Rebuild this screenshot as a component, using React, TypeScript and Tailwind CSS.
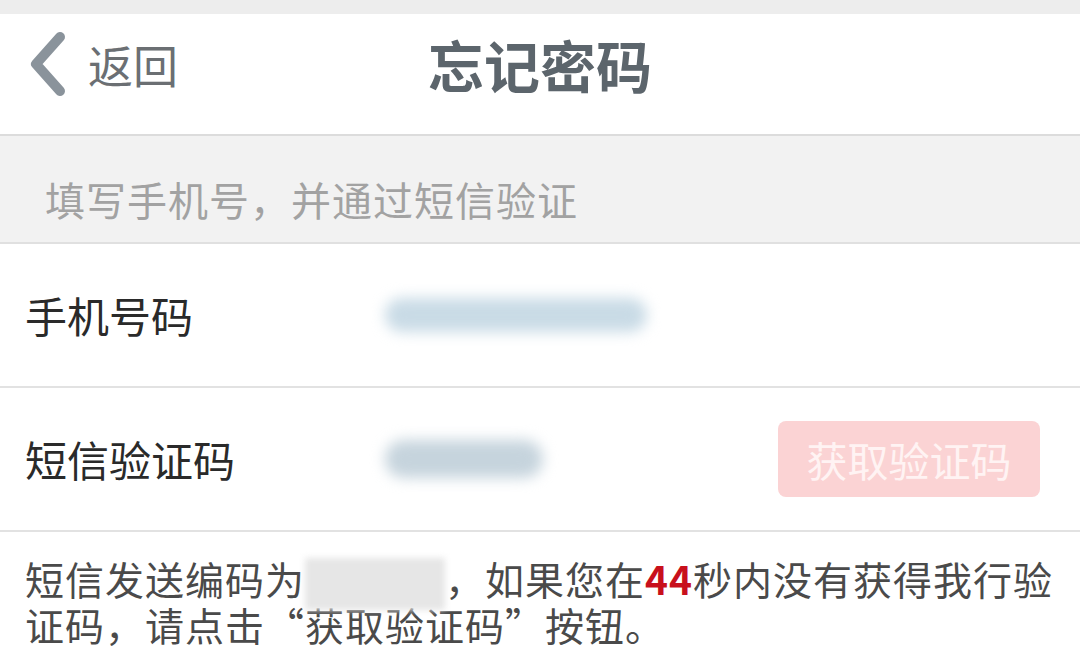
const CJK = "font-['Noto_Sans_CJK_SC','Noto_Sans',sans-serif]";

function Row({ label, children }: { label: string; children?: React.ReactNode }) {
  return (
    <div className="flex items-center h-[144px] border-b-2 border-[#e2e2e2] bg-white">
      <span className="w-[385px] pl-[25px] text-[42px] text-[#2a2a2a] leading-none">{label}</span>
      {children}
    </div>
  );
}

export default function App() {
  return (
    <div className={`w-[1080px] h-[672px] overflow-hidden bg-white ${CJK}`}>
      <div className="h-[14px] bg-[#ededed]" />
      {/* header */}
      <div className="relative flex items-center h-[122px] pb-[20px] bg-white border-b-2 border-[#dcdcdc]">
        <div className="flex items-center pl-[24px] gap-[18px]">
          <svg width="46" height="70" viewBox="0 0 46 70">
            <path d="M36 8 L12 35 L36 62" fill="none" stroke="#8a939b" strokeWidth="10" strokeLinecap="round" strokeLinejoin="round" />
          </svg>
          <span className="text-[45px] text-[#6b6f73] leading-none">返回</span>
        </div>
        <h1 className="absolute left-1/2 top-[22px] -translate-x-1/2 text-[56px] font-bold text-[#5c656c] leading-none">忘记密码</h1>
      </div>
      {/* hint */}
      <div className="flex items-center h-[108px] pt-[20px] bg-[#f2f2f2] border-b-2 border-[#e0e0e0] pl-[45px]">
        <span className="text-[40px] text-[#a2a2a2] leading-none tracking-[1px]">填写手机号，并通过短信验证</span>
      </div>
      <Row label="手机号码">
        <div className="w-[262px] h-[34px] rounded-full bg-[#c9dbe6] blur-[7px]" />
      </Row>
      <Row label="短信验证码">
        <div className="w-[158px] h-[38px] rounded-full bg-[#c6d4dd] blur-[7px]" />
        <div className="ml-auto mr-[40px] w-[262px] h-[76px] rounded-[8px] bg-[#fbd3d4] flex items-center justify-center">
          <span className="text-[41px] text-[#fff3f3] leading-none">获取验证码</span>
        </div>
      </Row>
      {/* notice */}
      <div className="pl-[25px] pr-[16px] pt-[24px] text-[39px] leading-[44px] tracking-[1px] text-[#4a4a4a]">
        短信发送编码为
        <span className="inline-block align-middle w-[140px] h-[52px] -my-[8px] bg-[#e6e6e6] blur-[3px]" />
        ，如果您在<span className="font-bold text-[#c8101c]">44</span>秒内没有获得我行验证码，请点击“获取验证码”按钮。
      </div>
    </div>
  );
}
